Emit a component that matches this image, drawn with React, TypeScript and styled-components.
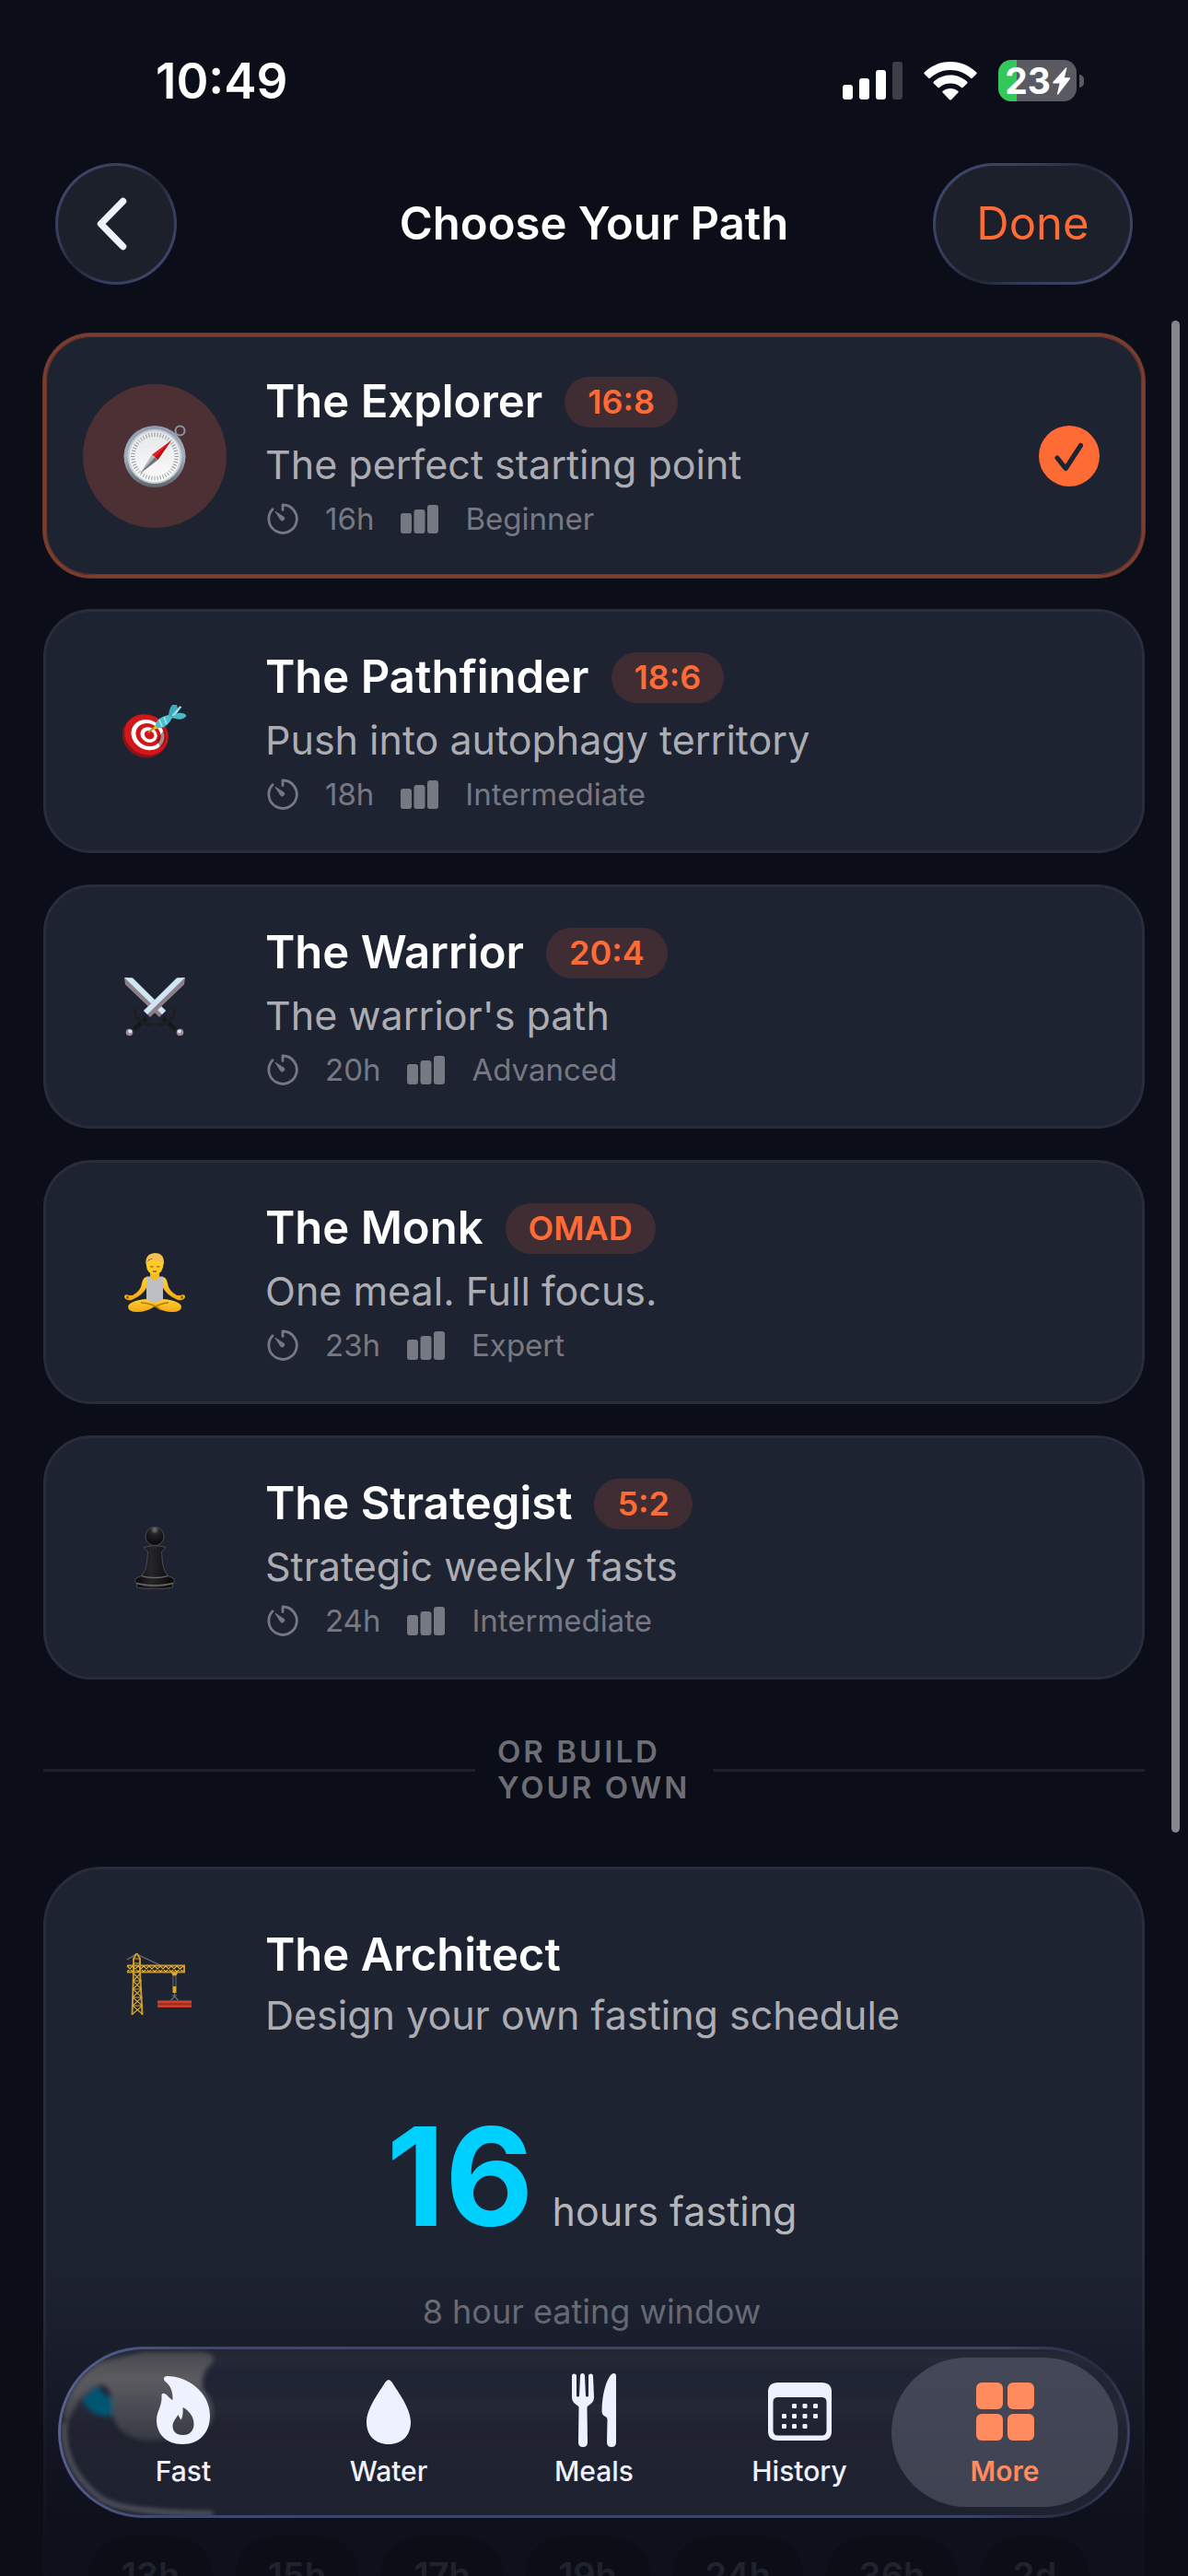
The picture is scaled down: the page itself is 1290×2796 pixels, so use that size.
import React, { useState } from "react";
import styled, { createGlobalStyle } from "styled-components";

const ink = "#0b0e18";
const surface = "#1e2332";
const line = "#292d3b";
const accent = "#ff6b35";
const muted = "#acadb2";
const faint = "#777982";
const glassText = "#eef1fe";

const GlobalStyle = createGlobalStyle`
  * { box-sizing: border-box; }
  body {
    margin: 0;
    background: ${ink};
    color: #ffffff;
    font-family: Inter, "Liberation Sans", sans-serif;
  }
  button { font: inherit; color: inherit; cursor: pointer; }
  svg { display: block; flex: none; }
`;

const Screen = styled.div`
  position: relative;
  display: flex;
  flex-direction: column;
  height: 100vh;
  overflow: hidden;
`;

const StatusBar = styled.div`
  display: flex;
  flex: none;
  align-items: center;
  justify-content: space-between;
  height: 177px;
  padding: 0 113px 2px 169px;
`;

const Clock = styled.time`
  font-size: 53px;
  line-height: 64px;
  font-weight: 600;
`;

const StatusIcons = styled.div`
  display: flex;
  align-items: center;
  gap: 23px;
`;

const Battery = styled.div`
  display: flex;
  align-items: center;
  gap: 3px;
`;

const BatteryBody = styled.div`
  display: flex;
  align-items: center;
  justify-content: center;
  gap: 2px;
  width: 85px;
  height: 45px;
  border-radius: 14px;
  background: linear-gradient(to right, #34c759 23%, #5a5b62 23%);
  font-size: 39px;
  line-height: 45px;
  font-weight: 700;
`;

const BatteryCap = styled.div`
  width: 5px;
  height: 14px;
  border-radius: 0 5px 5px 0;
  background: #5a5b62;
`;

const Header = styled.header`
  display: grid;
  flex: none;
  grid-template-columns: 1fr auto 1fr;
  align-items: center;
  padding: 0 60px;
`;

const GlassButton = styled.button<{ $wide?: boolean }>`
  display: flex;
  align-items: center;
  justify-content: center;
  justify-self: ${(p) => (p.$wide ? "end" : "start")};
  height: 132px;
  width: ${(p) => (p.$wide ? "217px" : "132px")};
  padding: 0;
  border: 3px solid transparent;
  border-radius: 66px;
  background:
    linear-gradient(#1c202b, #1c202b) padding-box,
    linear-gradient(135deg, #3c4568 15%, #333b59 35%, #222636 50%, #333b59 65%, #3c4568 85%) border-box;
  color: ${accent};
  font-size: 49px;
  line-height: 60px;
`;

const PageTitle = styled.h1`
  margin: 0;
  font-size: 49px;
  line-height: 60px;
  font-weight: 600;
`;

const Scroller = styled.main`
  position: relative;
  display: flex;
  flex: 1;
  flex-direction: column;
  min-height: 0;
  gap: 34px;
  overflow: hidden;
  padding: 53px 47px 0;
`;

const ScrollThumb = styled.div`
  position: absolute;
  top: 39px;
  right: 9px;
  width: 9px;
  height: 66%;
  border-radius: 5px;
  background: #86878b;
`;

const PlanCard = styled.button<{ $selected: boolean }>`
  display: flex;
  flex: none;
  align-items: center;
  gap: 42px;
  width: 100%;
  padding: 41px 46px 41px 40px;
  border: 3px solid ${(p) => (p.$selected ? "#7a3e30" : line)};
  border-radius: 52px;
  background: ${surface};
  box-shadow: ${(p) => (p.$selected ? "0 0 0 1px #6b3529, inset 0 0 0 1px #6b3529" : "none")};
  text-align: left;
`;

const IconDisc = styled.span<{ $selected?: boolean }>`
  display: flex;
  flex: none;
  align-items: center;
  justify-content: center;
  width: 156px;
  height: 156px;
  border-radius: 50%;
  background: ${(p) => (p.$selected ? "#4c3034" : "transparent")};
`;

const PlanText = styled.span`
  display: flex;
  flex: 1;
  flex-direction: column;
`;

const NameRow = styled.span`
  display: flex;
  align-items: center;
  gap: 24px;
  margin-bottom: 11px;
`;

const Name = styled.span`
  font-size: 49px;
  line-height: 60px;
  font-weight: 600;
`;

const Badge = styled.span`
  padding: 0 25px;
  border-radius: 28px;
  background: #402d33;
  color: ${accent};
  font-size: 36px;
  line-height: 55px;
  font-weight: 600;
`;

const Tagline = styled.span`
  color: ${muted};
  font-size: 43px;
  line-height: 54px;
`;

const Meta = styled.span`
  display: flex;
  align-items: center;
  gap: 29px;
  margin-top: 12px;
  padding-left: 2px;
  color: ${faint};
  font-size: 33px;
  line-height: 40px;
`;

const Divider = styled.div`
  display: flex;
  flex: none;
  align-items: center;
  gap: 24px;
  margin: 25px 0 32px;

  &::before,
  &::after {
    content: "";
    flex: 1;
    height: 3px;
    background: #1d1f2a;
  }
`;

const DividerLabel = styled.span`
  width: 210px;
  color: #6d6e75;
  font-size: 33px;
  line-height: 39px;
  font-weight: 600;
  letter-spacing: 3px;
  white-space: nowrap;
`;

const BuilderCard = styled.section`
  display: flex;
  flex: none;
  flex-direction: column;
  padding: 46px 45px 48px 40px;
  border: 3px solid ${line};
  border-radius: 64px;
  background: ${surface};
`;

const BuilderHead = styled.div`
  display: flex;
  align-items: center;
  gap: 42px;
`;

const BuilderName = styled.h2`
  margin: 0 0 8px;
  font-size: 49px;
  line-height: 60px;
  font-weight: 600;
`;

const Hours = styled.p`
  display: flex;
  align-items: baseline;
  justify-content: center;
  gap: 20px;
  margin: 44px 0 0;
  color: #b4b5ba;
  font-size: 43px;
  line-height: 54px;
`;

const HoursValue = styled.strong`
  color: #00d0ff;
  font-size: 148px;
  line-height: 176px;
  font-weight: 700;
`;

const EatingWindow = styled.p`
  margin: 34px 0 0;
  color: ${faint};
  font-size: 36px;
  line-height: 48px;
  text-align: center;
`;

const HoursSlider = styled.input`
  width: 100%;
  height: 84px;
  margin: 60px 0 0;
  opacity: 0;
`;

const Chips = styled.div`
  display: flex;
  gap: 24px;
  margin: 76px 12px 0 6px;
`;

const Chip = styled.button`
  flex: 1 1 auto;
  padding: 18px 0;
  border: 0;
  border-radius: 42px;
  background: ${ink};
  color: #b4b5ba;
  font-size: 38px;
  line-height: 48px;
  font-weight: 600;
`;

const BottomShade = styled.div`
  position: absolute;
  right: 0;
  bottom: 0;
  left: 0;
  height: 356px;
  background: linear-gradient(
    rgba(11, 13, 23, 0) 0%,
    rgba(11, 13, 23, 0.16) 22%,
    rgba(11, 13, 23, 0.84) 82%,
    rgba(11, 13, 23, 0.88) 100%
  );
  pointer-events: none;
`;

const TabBar = styled.nav`
  position: absolute;
  right: 63px;
  bottom: 63px;
  left: 63px;
  display: flex;
  padding: 9px 10px;
  border: 3px solid transparent;
  border-radius: 93px;
  background:
    linear-gradient(#212432 0%, #262936 6%, #202535 12%, #202433 26%, #252835 34%, #20232f 48%, #1e2230 100%) padding-box,
    linear-gradient(100deg, #5a6494 0%, #3e4872 12%, #3a4368 50%, #3a4368 86%, #262b40 95%, #3f4970 100%) border-box;
`;

const Refraction = styled.svg`
  position: absolute;
  top: 0;
  left: 0;
`;

const Tab = styled.a<{ $active?: boolean }>`
  position: relative;
  display: flex;
  flex: 1 1 0;
  flex-direction: column;
  align-items: center;
  height: 162px;
  padding-top: 12px;
  border-radius: 81px;
  background: ${(p) => (p.$active ? "linear-gradient(#434757, #3f4251)" : "transparent")};
  color: ${(p) => (p.$active ? "#ff8b5e" : glassText)};
  font-size: 30px;
  line-height: 36px;
  font-weight: ${(p) => (p.$active ? 600 : 500)};
  text-decoration: none;

  & + & {
    margin-left: -23px;
  }
`;

const TabIcon = styled.span`
  display: flex;
  align-items: center;
  justify-content: center;
  height: 93px;
`;

const SignalIcon = () => (
  <svg width="65" height="41" viewBox="0 0 65 41" fill="#fff">
    <rect x="0" y="25" width="11" height="16" rx="3" />
    <rect x="18" y="18" width="11" height="23" rx="3" />
    <rect x="36" y="9" width="11" height="32" rx="3" />
    <rect x="54" y="0" width="11" height="41" rx="3" fill="#3c3e48" />
  </svg>
);

const WifiIcon = () => (
  <svg width="58" height="42" viewBox="0 0 58 42" fill="#fff">
    <path d="M29 0C40 0 50 4.300 57.300 11.500Q58 12.400 57.300 13.200L52.800 17.800Q52 18.500 51.100 17.800C45 12 37.300 9 29 9S13 12 6.900 17.800Q6 18.500 5.200 17.800L.7 13.200Q0 12.400 .7 11.500C8 4.300 18 0 29 0Z" />
    <path d="M29 14.500C36 14.500 42.300 17.200 47.200 21.700Q48 22.500 47.200 23.400L42.600 27.900Q41.800 28.600 40.900 27.900C37.600 25 33.500 23.500 29 23.500S20.400 25 17.100 27.900Q16.200 28.600 15.400 27.900L10.800 23.400Q10 22.500 10.800 21.700C15.700 17.200 22 14.500 29 14.500Z" />
    <path d="M29 29C32.300 29 35.200 30 37.400 31.900Q38.200 32.700 37.400 33.500L29.900 41.200Q29 42 28.100 41.200L20.600 33.500Q19.800 32.700 20.600 31.900C22.800 30 25.700 29 29 29Z" />
  </svg>
);

const BoltIcon = () => (
  <svg width="19" height="30" viewBox="0 0 19 30" fill="#fff">
    <path d="M14.300 .5Q15.600-.3 15.300 1.400L12.800 11.300H18Q19.600 11.400 18.700 12.900L6.300 29.200Q4.800 30.600 5 28.600L7.600 17.600H1.100Q-.5 17.400 .4 16Z" />
  </svg>
);

const BackIcon = () => (
  <svg width="46" height="58" viewBox="0 0 46 58" fill="none" stroke={glassText} strokeWidth="7.500" strokeLinecap="round" strokeLinejoin="round">
    <path d="M30.500 4.500L6.500 29L30.500 53.500" />
  </svg>
);

const TimerIcon = () => (
  <svg width="34" height="34" viewBox="0 0 34 34" fill="none" stroke="currentColor" strokeWidth="2.800" strokeLinecap="round" strokeLinejoin="round">
    <path d="M17 7.500V2A15.200 15.200 0 1 1 6 6.800" />
    <path d="M9.300 9.400L18.600 15.500A2.500 2.500 0 0 1 15.400 18.900Z" fill="currentColor" strokeWidth="1" />
  </svg>
);

const LevelIcon = () => (
  <svg width="41" height="31" viewBox="0 0 41 31" fill="currentColor">
    <rect x="0" y="9" width="12" height="22" rx="3" />
    <rect x="14.500" y="5" width="12" height="26" rx="3" />
    <rect x="29" y="0" width="12" height="31" rx="3" />
  </svg>
);

const CheckIcon = () => (
  <svg width="66" height="66" viewBox="0 0 66 66">
    <circle cx="33" cy="33" r="33" fill={accent} />
    <path d="M20 35L29.200 46.500L45.500 21.500" fill="none" stroke={surface} strokeWidth="5.200" strokeLinecap="round" strokeLinejoin="round" />
  </svg>
);

const ticks = Array.from({ length: 48 }, (_, i) => i * 7.5);

const CompassArt = () => (
  <svg width="68" height="68" viewBox="0 0 68 68">
    <defs>
      <linearGradient id="rim" x1="0" y1="0" x2="0" y2="1">
        <stop offset="0" stopColor="#8e9cad" />
        <stop offset=".5" stopColor="#a4b0be" />
        <stop offset="1" stopColor="#5d656d" />
      </linearGradient>
      <linearGradient id="face" x1="0" y1="0" x2="0" y2="1">
        <stop offset="0" stopColor="#e6e7e9" />
        <stop offset="1" stopColor="#fbfbfb" />
      </linearGradient>
    </defs>
    <circle cx="61.500" cy="6.500" r="5" fill="none" stroke="#8795a5" strokeWidth="2" />
    <circle cx="34" cy="34.500" r="33.500" fill="url(#rim)" />
    <circle cx="34" cy="34.500" r="29.500" fill="#c9ced4" />
    <circle cx="34" cy="34.500" r="27.500" fill="url(#face)" />
    {ticks.map((a) => (
      <path key={a} d="M34 8.500V13" stroke="#8f949a" strokeWidth=".9" transform={`rotate(${a} 34 34.500)`} />
    ))}
    <path d="M52 17L31 32.500L37.500 38Z" fill="#ea1b22" />
    <path d="M52 17L34.200 35.200L37.500 38Z" fill="#b80f16" />
    <path d="M18 53L31 32.500L37.500 38Z" fill="#b4b6b8" />
    <path d="M18 53L34.200 35.200L37.500 38Z" fill="#6f7275" />
  </svg>
);

const DartArt = () => (
  <svg width="70" height="58" viewBox="0 2 70 58">
    <g transform="rotate(28 25 35)">
      <ellipse cx="25" cy="37" rx="25" ry="22" fill="#8d1216" />
      <ellipse cx="25.500" cy="34" rx="24.500" ry="21.500" fill="#cf171c" />
      <ellipse cx="27" cy="33.500" rx="18.500" ry="16" fill="#fff" />
      <ellipse cx="27.500" cy="33.200" rx="14" ry="12" fill="#cf171c" />
      <ellipse cx="28" cy="33" rx="9.500" ry="8" fill="#fff" />
      <ellipse cx="28.500" cy="32.800" rx="5.500" ry="4.500" fill="#cf171c" />
    </g>
    <path d="M37 40L46 28L47.500 38Q46 46 41 48Z" fill="#5d0d10" opacity=".5" />
    <path d="M28 32L38 24" stroke="#b88a10" strokeWidth="2" />
    <path d="M33 29L37 21.500L41 27Z" fill="#f2c218" />
    <path d="M36 25Q36 18 44 15L52 12L54 16Q50 25 42 27Q38 28 36 25Z" fill="#4cc0cd" />
    <path d="M40 18L43 26M45 15L48 23" stroke="#a1e8ec" strokeWidth="1.500" />
    <path d="M50 14Q51 2 57.500 0Q60 3 60 7L55 15Z" fill="#3fa9b8" />
    <path d="M53 14L62 3.500L64.500 4L57 14Z" fill="#9adfe5" />
    <path d="M52 16L60 11Q67 10 69.500 14Q66 18.500 60 17.500Z" fill="#49b9c6" />
  </svg>
);

const SwordHalf = () => (
  <>
    <path d="M0 0L9 0.500L45 36L38 43L1 7.500Z" fill="#8d7d86" />
    <path d="M0 0L9 .5L45 36L41 40Z" fill="#cfe6f4" />
    <path d="M43 42L57 54.500L54 58L40 45.500Z" fill="#17181a" />
    <path d="M37 51.500Q46 50.500 51 45Q55 40 54.500 35" fill="none" stroke="#1d1e20" strokeWidth="3.500" strokeLinecap="round" />
    <circle cx="60.500" cy="59.500" r="3.800" fill="#9c8c93" />
    <circle cx="59.800" cy="58.500" r="2" fill="#dfe1ea" />
  </>
);

const SwordsArt = () => (
  <svg width="66" height="64" viewBox="0 0 66 64">
    <SwordHalf />
    <g transform="translate(66 0) scale(-1 1)">
      <SwordHalf />
    </g>
  </svg>
);

const MonkArt = () => (
  <svg width="66" height="64" viewBox="0 0 66 64">
    <defs>
      <linearGradient id="skin" x1="0" y1="0" x2="0" y2="1">
        <stop offset="0" stopColor="#ffd02e" />
        <stop offset="1" stopColor="#f3a71a" />
      </linearGradient>
    </defs>
    <path d="M28 20H38V27H28Z" fill="#eeb01e" />
    <path d="M24 26Q20 27 19 33Q18 41 9 46L5 46Q0 44 0 48Q2 52 8 51Q20 46 24.500 37ZM42 26Q46 27 47 33Q48 41 57 46L61 46Q66 44 66 48Q64 52 58 51Q46 46 41.500 37Z" fill="url(#skin)" />
    <circle cx="3.500" cy="48" r="1.500" fill="#8c5f0c" />
    <circle cx="62.500" cy="48" r="1.500" fill="#8c5f0c" />
    <path d="M24 25.500H28Q33 32 38 25.500H42V55H24Z" fill="#bdbfc5" />
    <path d="M28 24H38Q37 29.500 33 29.500T28 24Z" fill="#f6bb22" />
    <path d="M23 50Q6 52 4 58Q4 64 14 64Q24 64 33 58Q42 64 52 64Q62 64 62 58Q60 52 43 50L33 54Z" fill="url(#skin)" />
    <path d="M18 54Q30 54 40 62M48 54Q42 54 34 58" fill="none" stroke="#b87812" strokeWidth="1.300" />
    <path d="M24 10Q23 22 33 24Q43 22 42.500 10Q33 2 24 10Z" fill="#ffca28" />
    <path d="M23.500 13Q22 1 33 0Q44 0 43 13L41 9Q34 10 30 6Q26 7 25 9Z" fill="#f6c04f" />
    <path d="M28 14.500Q30 16 31.500 14.500M35 14.500Q37 16 38.500 14.500" fill="none" stroke="#7b4b0b" strokeWidth="1" />
    <path d="M31 20H35" stroke="#a33d1c" strokeWidth="1.400" />
  </svg>
);

const PawnArt = () => (
  <svg width="44" height="68" viewBox="0 0 44 68">
    <defs>
      <radialGradient id="ball" cx=".5" cy=".15" r=".8">
        <stop offset="0" stopColor="#7b7c7e" />
        <stop offset=".3" stopColor="#232325" />
        <stop offset="1" stopColor="#0a0a0b" />
      </radialGradient>
      <linearGradient id="pawn" x1="0" y1="0" x2="1" y2="0">
        <stop offset="0" stopColor="#080809" />
        <stop offset=".4" stopColor="#262628" />
        <stop offset="1" stopColor="#080809" />
      </linearGradient>
    </defs>
    <g stroke="#4c4c50" strokeWidth="1">
      <path d="M10 22.500Q22 19 34 22.500Q32 26 29.500 27L30.500 40Q31.500 48 36 53L42 56Q45 60 41 63L41.500 66Q22 70 2.500 66L3 63Q-1 60 2 56L8 53Q12.500 48 13.500 40L14.500 27Q12 26 10 22.500Z" fill="url(#pawn)" />
      <circle cx="22" cy="10.500" r="10" fill="url(#ball)" />
    </g>
    <path d="M8 53.500Q22 57.500 36 53.500M2 61.500Q22 66.500 42 61.500" fill="none" stroke="#6a6a6e" strokeWidth="1.300" />
  </svg>
);

const CraneArt = () => (
  <svg width="80" height="67" viewBox="-10 0 80 67" fill="none">
    <path d="M0 7L10 1L36 13" stroke="#6c7077" strokeWidth="1.300" />
    <path d="M0 13.500H62V20.500H0M5.500 67L7 20V6L10.500 0L14 6V20L16.500 67" stroke="#c9962a" strokeWidth="2" />
    <path d="M0 14L6 20L12 14L18 20L24 14L30 20L36 14L42 20L48 14L54 20L61 14M0 20L6 14L12 20L18 14L24 20L30 14L36 20L42 14L48 20L54 14L61 20" stroke="#e0b23b" strokeWidth="1.100" />
    <path d="M7 22L15 30L6.500 39L16 48L6 57L16.500 66M14.500 22L6.500 30L15.500 39L6 48L16.500 57L6 66M6.500 30H15M6.500 39H15.500M6 48H16M6 57H16.500" stroke="#d9a835" strokeWidth="1.100" />
    <path d="M7.500 6H13.500M7.500 11H13.500" stroke="#d9a835" />
    <path d="M48 21H55L53.500 24.500H49.500Z" fill="#d9a835" />
    <path d="M50 25V36M53 25V36" stroke="#6c7077" />
    <path d="M49.500 36H53.500V43H49.500Z" fill="#d9a835" />
    <path d="M51.500 43V47L42 57M51.500 47L61 57M49 46H54" stroke="#6c7077" strokeWidth="1.200" />
    <rect x="33" y="51" width="37" height="8" fill="#a72c1e" />
    <path d="M33 53H70M33 57.500H70" stroke="#d9482e" strokeWidth="1.600" />
  </svg>
);

const FlameIcon = () => (
  <svg width="58" height="78" viewBox="0 0 58 78" fill="currentColor">
    <path fillRule="evenodd" d="M11.500 0C33 0 58 17 58 43C58 61 47 74 28 74C10 74 0 62 0 48C0 38 6 33 5.500 22C5 17.500 9 18 12 21.500C14.500 24 16 25.500 17.500 26C18 17 15 10 9 5.500C7 3 8 0 11.500 0ZM28.500 34C29 39 28.500 44 26.800 47.500C25.500 46.500 24.500 44.500 23.500 42C20 47 17.500 50 17.500 54.500C17.500 60 21.500 64 28.500 64C36 64 40.500 59.500 40.500 52C40.500 44 35 37 28.500 34Z" />
  </svg>
);

const DropIcon = () => (
  <svg width="48" height="70" viewBox="0 0 48 70" fill="currentColor">
    <path d="M20.500 2.500Q24-2.500 27.500 2.500C34 13 48 31 48 46C48 61 38 70 24 70S0 61 0 46C0 31 14 13 20.500 2.500Z" />
  </svg>
);

const MealsIcon = () => (
  <svg width="48" height="83" viewBox="0 0 48 83" fill="currentColor">
    <path d="M2.500 .5Q5 .5 5 3V24.500Q5 25.500 6.500 25.500T8 24.500L9 3Q9.200 0 11.500 0T14 3L15 24.500Q15 25.500 16.500 25.500T18 24.500V3Q18 .5 20.500 .5T23 3L24 26Q24 31 20 33.500Q16.500 35.500 16.500 37.500L17 75Q17 80 12 80T7 75L7.500 37.500Q7.500 35.500 4 33.500Q0 31 0 26L0 3Q0 .5 2.500 .5Z" />
    <path d="M45.500 0Q48 0 48 3V75Q48 80 43 80T38 75L38.500 50Q38.500 48 36.500 47Q32.500 45.500 32.500 41C32.500 24 37 8 42 2Q44 0 45.500 0Z" />
  </svg>
);

const calendarDots = [
  [26, 23], [37.500, 23], [49, 23],
  [15, 34], [26, 34], [37.500, 34], [49, 34],
  [15, 45], [26, 45], [37.500, 45],
];

const CalendarIcon = () => (
  <svg width="69" height="63" viewBox="0 0 69 63" fill="currentColor">
    <path fillRule="evenodd" d="M11 0H58Q69 0 69 10V53Q69 63 58 63H11Q0 63 0 53V10Q0 0 11 0ZM11 16Q5.500 16 5.500 21V52Q5.500 57.500 11 57.500H58Q63.500 57.500 63.500 52V21Q63.500 16 58 16Z" />
    {calendarDots.map(([x, y]) => (
      <rect key={`${x}-${y}`} x={x} y={y} width="5" height="5" rx="1.200" />
    ))}
  </svg>
);

const GridIcon = () => (
  <svg width="63" height="63" viewBox="0 0 63 63" fill="currentColor">
    <rect width="29" height="29" rx="6" />
    <rect x="34" width="29" height="29" rx="6" />
    <rect y="34" width="29" height="29" rx="6" />
    <rect x="34" y="34" width="29" height="29" rx="6" />
  </svg>
);

const GlassRefraction = () => (
  <Refraction width="190" height="180" viewBox="0 0 190 180" aria-hidden="true">
    <defs>
      <filter id="soft" x="-20%" y="-20%" width="140%" height="140%">
        <feGaussianBlur stdDeviation="2.500" />
      </filter>
      <linearGradient id="smoke" x1="0" y1="0" x2="0" y2="1">
        <stop offset="0" stopColor="#48494f" />
        <stop offset=".3" stopColor="#5b5b60" />
        <stop offset="1" stopColor="#373a44" />
      </linearGradient>
      <clipPath id="barEnd">
        <path d="M190 0H90A90 90 0 0 0 90 180H190Z" />
      </clipPath>
    </defs>
    <g clipPath="url(#barEnd)">
      <g filter="url(#soft)">
        <path d="M90 3H150Q172 4 164 15Q150 28 155 44Q170 60 163 80Q150 97 95 99Q60 96 56 68Q58 40 42 38Q18 48 6 84Q-6 50 40 14Z" fill="url(#smoke)" />
        <path d="M23 55Q32 42 42 40Q44 50 56 52V72Q34 76 23 55Z" fill="#00546f" />
      </g>
      <path d="M4 80Q0 130 45 163Q70 178 165 178" fill="none" stroke="#575962" strokeWidth="5" filter="url(#soft)" />
    </g>
  </Refraction>
);

const plans = [
  { name: "The Explorer", ratio: "16:8", tagline: "The perfect starting point", hours: "16h", level: "Beginner", Art: CompassArt },
  { name: "The Pathfinder", ratio: "18:6", tagline: "Push into autophagy territory", hours: "18h", level: "Intermediate", Art: DartArt },
  { name: "The Warrior", ratio: "20:4", tagline: "The warrior's path", hours: "20h", level: "Advanced", Art: SwordsArt },
  { name: "The Monk", ratio: "OMAD", tagline: "One meal. Full focus.", hours: "23h", level: "Expert", Art: MonkArt },
  { name: "The Strategist", ratio: "5:2", tagline: "Strategic weekly fasts", hours: "24h", level: "Intermediate", Art: PawnArt },
];

const presets = ["13h", "15h", "17h", "19h", "24h", "36h", "2d"];

const tabs = [
  { label: "Fast", Icon: FlameIcon },
  { label: "Water", Icon: DropIcon },
  { label: "Meals", Icon: MealsIcon },
  { label: "History", Icon: CalendarIcon },
  { label: "More", Icon: GridIcon },
];

export default function App() {
  const [selected, setSelected] = useState("The Explorer");
  const [hours, setHours] = useState(16);

  return (
    <Screen>
      <GlobalStyle />
      <StatusBar>
        <Clock>10:49</Clock>
        <StatusIcons>
          <SignalIcon />
          <WifiIcon />
          <Battery>
            <BatteryBody>
              23
              <BoltIcon />
            </BatteryBody>
            <BatteryCap />
          </Battery>
        </StatusIcons>
      </StatusBar>

      <Header>
        <GlassButton aria-label="Back">
          <BackIcon />
        </GlassButton>
        <PageTitle>Choose Your Path</PageTitle>
        <GlassButton $wide>Done</GlassButton>
      </Header>

      <Scroller>
        {plans.map(({ name, ratio, tagline, hours: length, level, Art }) => {
          const active = name === selected;
          return (
            <PlanCard key={name} $selected={active} aria-pressed={active} onClick={() => setSelected(name)}>
              <IconDisc $selected={active}>
                <Art />
              </IconDisc>
              <PlanText>
                <NameRow>
                  <Name>{name}</Name>
                  <Badge>{ratio}</Badge>
                </NameRow>
                <Tagline>{tagline}</Tagline>
                <Meta>
                  <TimerIcon />
                  <span>{length}</span>
                  <LevelIcon />
                  <span>{level}</span>
                </Meta>
              </PlanText>
              {active && <CheckIcon />}
            </PlanCard>
          );
        })}

        <Divider>
          <DividerLabel>
            OR BUILD
            <br />
            YOUR OWN
          </DividerLabel>
        </Divider>

        <BuilderCard>
          <BuilderHead>
            <IconDisc>
              <CraneArt />
            </IconDisc>
            <PlanText as="div">
              <BuilderName>The Architect</BuilderName>
              <Tagline>Design your own fasting schedule</Tagline>
            </PlanText>
          </BuilderHead>
          <Hours>
            <HoursValue>{hours}</HoursValue>
            hours fasting
          </Hours>
          <EatingWindow>{24 - hours} hour eating window</EatingWindow>
          <HoursSlider
            type="range"
            min={12}
            max={23}
            value={hours}
            aria-label="Fasting hours"
            onChange={(e) => setHours(Number(e.target.value))}
          />
          <Chips>
            {presets.map((preset) => (
              <Chip key={preset}>{preset}</Chip>
            ))}
          </Chips>
        </BuilderCard>
        <ScrollThumb />
      </Scroller>

      <BottomShade />
      <TabBar>
        <GlassRefraction />
        {tabs.map(({ label, Icon }) => (
          <Tab key={label} href={`#${label.toLowerCase()}`} $active={label === "More"}>
            <TabIcon>
              <Icon />
            </TabIcon>
            {label}
          </Tab>
        ))}
      </TabBar>
    </Screen>
  );
}
